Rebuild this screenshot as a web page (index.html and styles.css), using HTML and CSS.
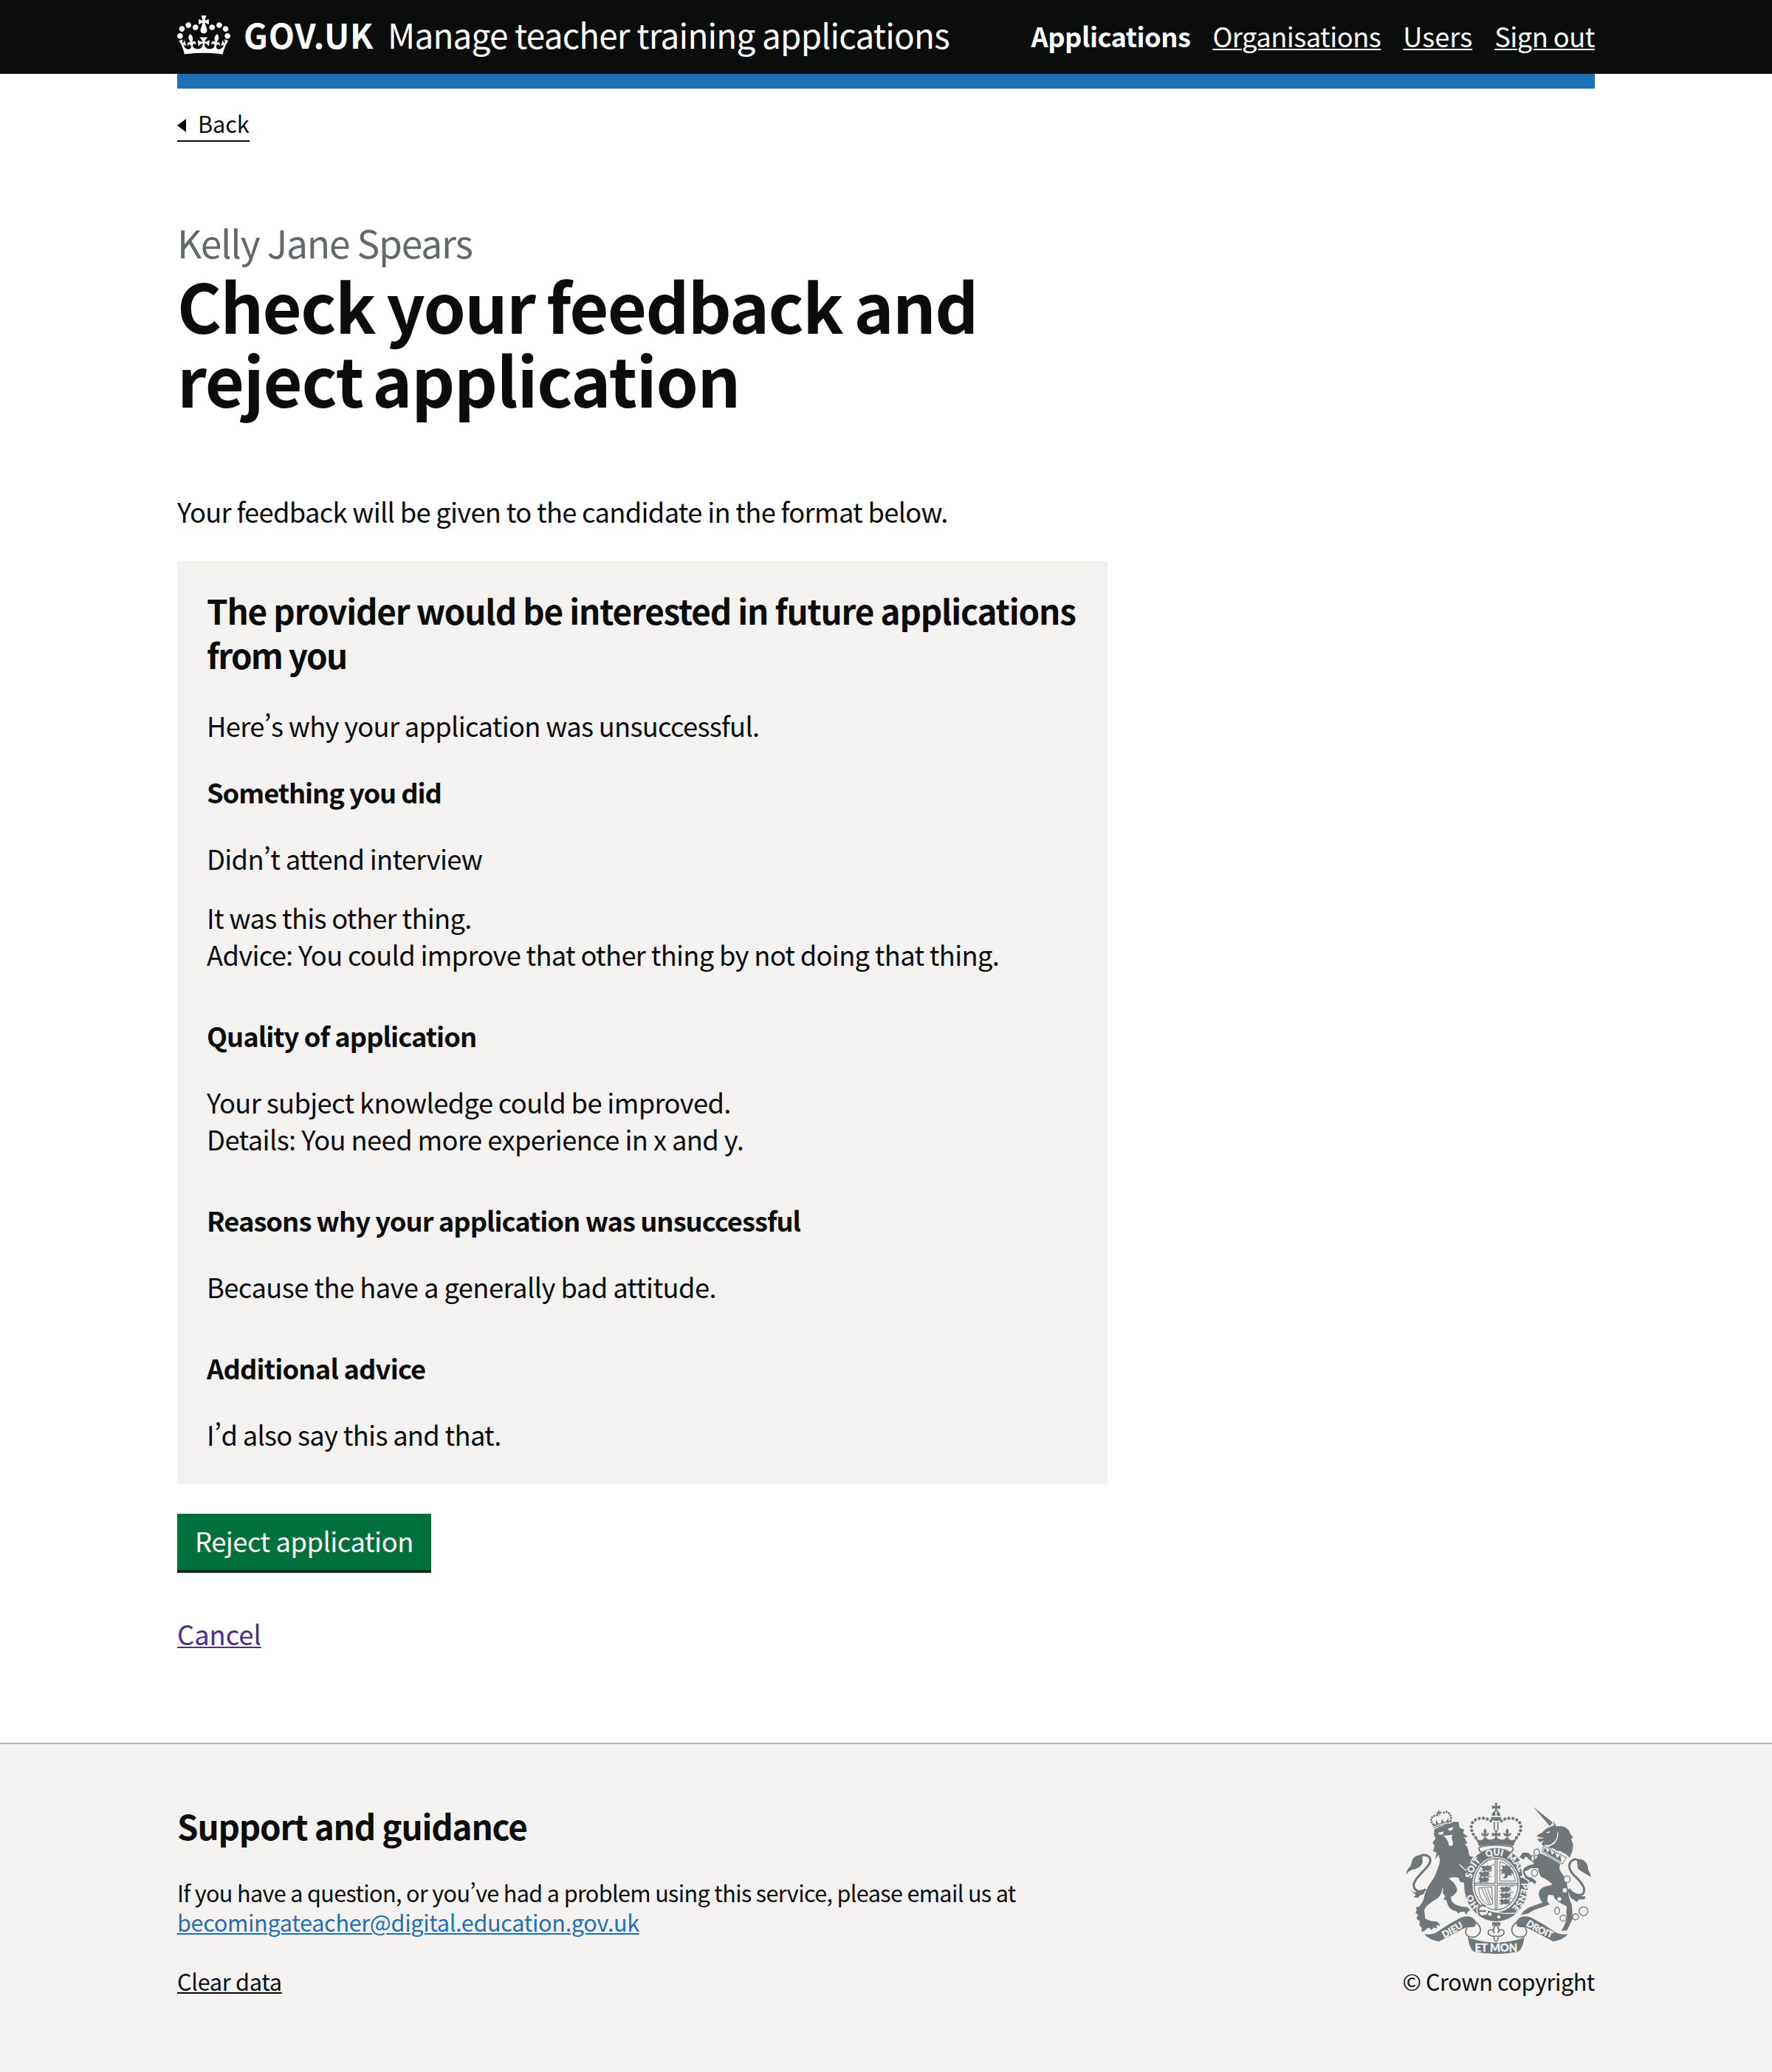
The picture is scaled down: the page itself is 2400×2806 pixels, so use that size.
FILE: index.html
```html
<!DOCTYPE html>
<html lang="en">
<head>
<meta charset="utf-8">
<title>Check your feedback and reject application - Manage teacher training applications - GOV.UK</title>
<link rel="stylesheet" href="styles.css">
</head>
<body>
<header class="header">
  <div class="container header-row">
    <a class="logo" href="#">
      <svg class="crown" viewBox="0 0 132 97" fill="currentColor" aria-hidden="true"><path fill-rule="evenodd" d="M25 30.2c3.5 1.5 7.7-.2 9.1-3.7 1.5-3.6-.2-7.8-3.9-9.2-3.6-1.4-7.6.3-9.1 3.9-1.4 3.5.3 7.5 3.9 9zM9 39.5c3.6 1.5 7.8-.2 9.2-3.7 1.5-3.6-.2-7.8-3.9-9.1-3.6-1.5-7.6.2-9.1 3.8-1.4 3.5.3 7.5 3.8 9zM4.4 57.2c3.5 1.5 7.7-.2 9.1-3.8 1.5-3.6-.2-7.7-3.9-9.1-3.5-1.5-7.6.3-9.1 3.8-1.4 3.5.3 7.6 3.9 9.1zm38.3-21.4c3.5 1.5 7.7-.2 9.1-3.8 1.5-3.6-.2-7.7-3.9-9.1-3.6-1.5-7.6.3-9.1 3.8-1.3 3.6.4 7.7 3.9 9.1zm64.4-5.6c-3.6 1.5-7.8-.2-9.1-3.7-1.5-3.6.2-7.8 3.8-9.2 3.6-1.4 7.7.3 9.2 3.9 1.3 3.5-.4 7.5-3.9 9zm15.9 9.3c-3.6 1.5-7.7-.2-9.1-3.7-1.5-3.6.2-7.8 3.7-9.1 3.6-1.5 7.7.2 9.2 3.8 1.5 3.5-.3 7.5-3.8 9zm4.7 17.7c-3.6 1.5-7.8-.2-9.2-3.8-1.5-3.6.2-7.7 3.9-9.1 3.6-1.5 7.7.3 9.2 3.8 1.3 3.5-.4 7.6-3.9 9.1zM89.3 35.8c-3.6 1.5-7.8-.2-9.2-3.8-1.4-3.6.2-7.7 3.9-9.1 3.6-1.5 7.7.3 9.2 3.8 1.4 3.6-.3 7.7-3.9 9.1zM69.7 17.7l8.9 4.7V9.3l-8.9 2.8c-.2-.3-.5-.6-.9-.9L72.4 0H59.6l3.5 11.2c-.3.3-.6.5-.9.9l-8.8-2.8v13.1l8.8-4.7c.3.3.6.7.9.9l-5 15.4v.1c-.2.8-.4 1.6-.4 2.4 0 4.1 3.1 7.5 7 8.1h.2c.3 0 .7.1 1 .1.4 0 .7 0 1-.1h.2c4-.6 7.1-4.1 7.1-8.1 0-.8-.1-1.7-.4-2.4V34l-5.1-15.4c.4-.2.7-.6 1-.9zM66 92.8c16.9 0 32.8 1.1 47.1 3.2 4-16.9 8.9-26.7 14-33.5l-9.6-3.4c1 4.9 1.1 7.2 0 10.2-1.5-1.4-3-4.3-4.2-8.7L108.6 76c2.8-2 5-3.2 7.5-3.3-4.4 9.4-10 11.9-13.6 11.2-4.3-.8-6.3-4.6-5.6-7.9 1-4.7 5.7-5.9 8-.5 4.3-8.7-3-11.4-7.6-8.8 7.1-7.2 7.9-13.5 2.1-21.1-8 6.1-8.1 12.3-4.5 20.8-4.7-5.4-12.1-2.5-9.5 6.2 3.4-5.2 7.9-2 7.2 3.1-.6 4.3-6.4 7.8-13.5 7.2-10.3-.9-10.9-8-11.2-13.8 2.5-.5 7.1 1.8 11 7.3L80.2 60c-4.1 4.4-8 5.3-12.3 5.4 1.4-4.4 8-11.6 8-11.6H55.5s6.4 7.2 7.9 11.6c-4.2-.1-8-1-12.3-5.4l1.4 16.4c3.9-5.5 8.5-7.7 10.9-7.3-.3 5.8-.9 12.8-11.1 13.8-7.2.6-12.9-2.9-13.5-7.2-.7-5 3.8-8.3 7.1-3.1 2.7-8.7-4.6-11.6-9.4-6.2 3.7-8.5 3.6-14.7-4.6-20.8-5.8 7.6-5 13.9 2.2 21.1-4.7-2.6-11.9.1-7.7 8.8 2.3-5.5 7.1-4.2 8.1.5.7 3.3-1.3 7.1-5.7 7.9-3.5.7-9-1.8-13.5-11.2 2.5.1 4.7 1.3 7.5 3.3l-4.7-15.4c-1.2 4.4-2.7 7.2-4.3 8.7-1.1-3-.9-5.3 0-10.2l-9.5 3.4c5 6.9 9.9 16.7 14 33.5 14.8-2.1 30.8-3.2 47.7-3.2z"/></svg>
      <span class="logotype">GOV.UK</span>
    </a>
    <a class="service" href="#">Manage teacher training applications</a>
    <nav class="nav">
      <a class="nav-current" href="#">Applications</a>
      <a href="#">Organisations</a>
      <a class="track-0" href="#">Users</a>
      <a href="#">Sign out</a>
    </nav>
  </div>
</header>

<div class="container">
  <div class="phase-bar"></div>
  <a class="back" href="#"><svg class="back-arrow" viewBox="0 0 12 18" aria-hidden="true"><path d="M0 9 12 0v18z" fill="currentColor"/></svg>Back</a>

  <main class="main">
    <span class="caption">Kelly Jane Spears</span>
    <h1 class="title">Check your feedback and<br><span class="title-end">reject application</span></h1>
    <p class="body lead">Your feedback will be given to the candidate in the format below.</p>

    <section class="feedback">
      <h2 class="heading">The provider would be interested in future applications<br><span class="heading-end">from you</span></h2>
      <p class="body">Here<span class="apos">’</span>s why your application was unsuccessful.</p>
      <h3 class="subheading track-30">Something you did</h3>
      <p class="body">Didn<span class="apos">’</span>t attend interview</p>
      <p class="body close">It was this other thing.<br>Advice: You could improve that other thing by not doing that thing.</p>
      <h3 class="subheading section">Quality of application</h3>
      <p class="body track-17">Your subject knowledge could be improved.<br><span class="track-16">Details: You need more experience in x and y.</span></p>
      <h3 class="subheading section track-27">Reasons why your application was unsuccessful</h3>
      <p class="body track-15">Because the have a generally bad attitude.</p>
      <h3 class="subheading section track-23">Additional advice</h3>
      <p class="body">I<span class="apos">’</span>d also say this and that.</p>
    </section>

    <button class="button" type="button">Reject application</button>
    <p class="cancel"><a href="#">Cancel</a></p>
  </main>
</div>

<footer class="footer">
  <div class="container footer-row">
    <div class="support">
      <h2 class="footer-heading">Support and guidance</h2>
      <p class="small">If you have a question, or you<span class="apos">’</span>ve had a problem using this service, please email us at<br><a class="mail" href="#">becomingateacher@digital.education.gov.uk</a></p>
      <p class="small clear"><a href="#">Clear data</a></p>
    </div>
    <a class="copyright" href="#">
      <svg class="arms" viewBox="70 60 756 624" aria-hidden="true">
        <defs>
          <path id="garter" d="M437 516A103 119 0 0 1 437 278A103 119 0 0 1 437 516"/>
          <path id="dieu" d="M214 620Q264 596 316 561"/>
          <path id="droit" d="M549 556Q600 592 680 622"/>
          <g id="beast"><path d="M2 10l8-6 10 3 8-5 8 4 9-3-3 7 6 5-8 3 3 7-8-3-7 3-8-3-8 5-6-4 4-6z"/><path d="M4 24l-5-5M44 4l8-5 5 4" fill="none" stroke-width="3"/></g>
          <path id="cross" d="M-6-17H6L3-4 17-7V7L3 4 6 17H-6L-3 4-17 7V-7L-3-4z"/>
          <path id="fleur" d="M0-20Q11-8 3 3L16-2Q16 12 3 12V20H-3V12Q-16 12-16-2L-3 3Q-11-8 0-20z"/>
        </defs>
        <!-- lion -->
        <g transform="translate(45 45)">
          <path class="ink" d="M140 128 160 118Q190 108 218 97L240 97 243 120 262 128 258 142 278 158 262 160 276 185 264 186Q280 200 281 225 283 240 300 238 285 258 282 275L270 290 285 300 290 330 300 345 303 375 290 372 282 380 270 370 262 345 245 340 240 325Q225 318 200 326 232 350 234 375 225 395 208 402L212 420Q230 440 258 442 280 440 288 458L280 458 270 474 264 462 245 462 240 470 230 460Q205 455 196 435L190 415 178 412 185 400 175 385Q178 370 175 360 172 395 150 410 115 430 105 445L100 455 104 490Q125 502 150 502 165 510 163 520L150 516 152 530 138 526 130 536 118 526 110 532 98 542 88 542 90 528 80 515 82 500 68 490 75 475 64 465 70 455 66 445 80 440Q98 420 100 400 105 375 125 345 145 320 155 285 165 265 163 248L158 230 145 250 150 222 135 215 142 195 134 180 146 165 140 150z"/>
          <path class="paper" d="M156 141 179 136 176 147 164 150zM196 124 220 118 211 132 201 133zM178 153 216 149 211 160 214 172Q223 190 209 196 197 194 198 180L190 165z"/>
          <path class="paper-line" d="M243 270 280 304 290 332"/>
          <path class="line" stroke-width="9" d="M106 370C85 388 58 380 57 352 62 320 112 290 123 262 130 238 108 225 84 235"/>
          <path class="ink" d="M92 232C65 228 50 245 47 268 44 285 30 280 27 312 35 295 50 291 65 288 85 280 97 265 93 250zM42 373 60 384 106 368 98 390 82 396 75 405 57 403 66 394z"/>
          <path class="beads" d="M136 108C120 88 130 74 145 71L158 69M207 92C214 72 202 58 188 56L172 62" stroke-width="9" stroke-dasharray="0 11"/>
          <path class="ink" d="M134 101 141 123Q170 106 209 107L208 90 202 100 196 82 188 98 180 98 172 84 168 102 158 104 148 88 147 108z"/>
          <use href="#cross" class="ink" transform="translate(160 60) rotate(-12) scale(.6)"/>
          <path class="paper-line" d="M139 117Q175 102 210 101"/>
        </g>
        <!-- crown -->
        <use href="#cross" class="ink" x="437" y="82"/>
        <path class="ink" d="M420 118Q420 98 434 98V116zM454 118Q454 98 440 98V116zM415 122H459Q456 138 437 138 418 138 415 122z"/>
        <path class="line" stroke-width="5" d="M430 142V175M444 142V175"/>
        <path class="beads" stroke-width="13" stroke-dasharray="0 16.5" d="M354 206C320 165 338 127 380 127 398 127 408 132 420 140M520 206C554 165 536 127 494 127 476 127 466 132 454 140"/>
        <path class="ink" d="M347 194 368 241Q437 225 506 241L527 194 510 215 494 215Q482 198 470 213L456 214 437 206 418 214 404 213Q392 198 380 215L364 215z"/>
        <use href="#fleur" class="ink" x="392" y="188"/><use href="#fleur" class="ink" x="482" y="188"/><use href="#cross" class="ink" x="437" y="193"/>
        <path class="line" stroke-width="5" d="M378 264C364 260 364 246 376 243Q437 229 498 243C510 246 510 260 496 264"/>
        <!-- garter -->
        <ellipse class="ink" cx="437" cy="397" rx="130" ry="149"/>
        <ellipse class="paper" cx="437" cy="397" rx="96" ry="112"/>
        <ellipse class="line" cx="437" cy="395" rx="89" ry="104" stroke-width="4"/>
        <g class="motto" font-size="36">
          <text><textPath href="#garter" startOffset="15.5%">HO</textPath></text>
          <text><textPath href="#garter" startOffset="34.5%">SOIT</textPath></text>
          <text><textPath href="#garter" startOffset="49%">QUI</textPath></text>
          <text><textPath href="#garter" startOffset="62%">MAL</textPath></text>
          <text><textPath href="#garter" startOffset="70.5%">Y</textPath></text>
          <text><textPath href="#garter" startOffset="82%">PENSE</textPath></text>
        </g>
        <g class="ink charges">
          <use href="#beast" x="374" y="316"/><use href="#beast" x="364" y="340"/><use href="#beast" x="362" y="363"/>
          <use href="#beast" x="450" y="402"/><use href="#beast" x="450" y="427"/><use href="#beast" x="448" y="452"/>
          <path d="M460 318l12 4 8-6 6 8 12-2-6 9 12 8 4 14-10-4 2 12-12-4-10 14-14-2 10-8-4-12-12 6 4-12-8-4 10-6z"/>
        </g>
        <path class="line" stroke-width="3" d="M452 303V382H516M452 303Q500 310 516 382M366 410 419 406 423 476 404 480Q366 455 366 410M378 412 408 476M390 412 414 474M402 412 418 460"/>
        <path class="line" stroke-width="11" d="M437 291V497M349 395H525"/>
        <path class="paper-line" d="M437 293V495M351 395H523"/>
        <path class="paper-line" d="M392 492Q440 520 520 512"/>
        <circle class="paper" cx="380" cy="503" r="24"/>
        <path class="line" stroke-width="7" d="M396 486Q380 474 368 488 360 504 370 520 382 530 394 520M364 504H396"/>
        <circle class="paper" cx="412" cy="517" r="7"/><circle class="paper" cx="448" cy="528" r="7"/>
        <!-- unicorn -->
        <g transform="translate(510 45)">
          <path class="paper" d="M18 232 42 214 100 235 100 330 76 350 36 325z"/>
          <path class="ink" d="M78 36 158 100 145 114zM160 93 172 115Q190 112 205 118 225 128 228 145L240 160 232 165 240 190Q240 215 225 243L212 228 198 222 190 215 175 215 162 205 150 205 136 198Q165 190 172 175L165 180Q150 195 125 190L118 195 112 185 122 172 105 180 95 168 108 160 92 155Q95 148 115 140 125 125 145 118L163 110z"/>
          <path class="paper" d="M128 141 146 134 144 142zM100 164 120 158 114 166z"/>
          <path class="paper-line" d="M176 140Q184 172 140 197"/>
          <path class="ink" d="M108 225 150 245 188 268Q180 285 190 300 215 330 218 370 222 410 235 435L238 490 226 515 215 538 192 540 205 515 215 490 212 460 215 440Q180 425 165 408L160 395 140 393 136 402 135 420 145 432 120 442 80 455 55 470 28 475 38 460 60 445 100 430 115 425Q100 405 100 385 105 365 130 358 150 355 155 350 135 330 110 320 98 305 98 285L70 285Q55 295 42 298L48 310Q55 325 70 322L90 338 85 350 70 338 60 345 62 335 45 325 35 300 40 285Q60 270 78 270L80 262 60 250Q50 235 45 240L38 250 22 240 35 222 58 222Q75 240 88 250L95 235z"/>
          <path class="line" stroke-width="3" d="M120 196 113 219 196 268 212 244"/>
          <path class="beads" stroke-width="6" stroke-dasharray="0 9" d="M124 196 212 242"/>
          <path class="ink" d="M118 216 126 200 136 222 146 206 154 232 166 218 174 244 188 230 192 260z"/>
          <path class="line" stroke-width="9" d="M222 370C250 402 290 405 284 366 274 330 224 310 224 276 228 250 248 244 262 254"/>
          <path class="ink" d="M254 250C282 242 300 265 300 285 303 300 310 302 312 322 295 308 276 302 260 288zM213 365 230 405 255 422 264 412 286 412 290 400 262 398z"/>
          <g class="chain"><ellipse cx="92" cy="220" rx="11" ry="13"/><ellipse cx="76" cy="245" rx="8" ry="11"/><ellipse cx="83" cy="304" rx="12" ry="14"/><circle cx="215" cy="330" r="13"/><ellipse cx="175" cy="458" rx="10" ry="14"/><ellipse cx="200" cy="488" rx="13" ry="12"/><circle cx="250" cy="483" r="12"/><circle cx="282" cy="460" r="18"/></g>
          <circle class="paper" cx="206" cy="375" r="9"/><circle class="paper" cx="184" cy="410" r="8"/>
        </g>
        <!-- scroll -->
        <g id="scroll-half"><path class="ink" d="M145 598Q180 603 202 586 245 555 295 530 335 518 352 542 362 566 340 570L316 570Q270 592 205 628 165 622 145 598z"/><path class="line" stroke-width="5" d="M354 548Q384 575 368 596 352 618 322 606 304 590 320 570M324 606 331 640"/></g>
        <use href="#scroll-half" transform="matrix(-1 0 0 1 874 0)"/>
        <path class="ink" d="M324 612Q437 652 550 612 546 655 528 668 437 688 345 668 328 655 324 612z"/>
        <g class="motto" font-size="38"><text><textPath href="#dieu" startOffset="50%">DIEU</textPath></text><text><textPath href="#droit" startOffset="47%">DROIT</textPath></text><text x="437" y="669" font-size="44">ET MON</text></g>
        <path class="ink" d="M421 550H454V566Q437 556 421 566z"/>
        <path class="line" stroke-width="5" d="M437 560Q454 576 444 594 452 572 468 584 474 602 452 606 446 606 445 612 444 626 437 627 430 626 429 612 428 606 422 606 400 602 406 584 422 572 430 594 420 576 437 560M424 606H450"/>
      </svg>
      <span>© Crown copyright</span>
    </a>
  </div>
</footer>
</body>
</html>
```
FILE: styles.css
```css
* { box-sizing: border-box; }

body {
  margin: 0;
  background: #fff;
  color: #0b0c0c;
  font-family: "Noto Sans CJK SC", "Noto Sans", sans-serif;
  font-size: 36.3px;
  line-height: 50px;
  letter-spacing: -0.019em;
}

h1, h2, h3, p { margin: 0; }

a {
  color: inherit;
  text-decoration-thickness: 2px;
  text-underline-offset: 2px;
}

/* Proportional form of the curly apostrophe */
.apos { font-feature-settings: "pwid", "palt"; }

.container { width: 1920px; margin: 0 auto; }

/* Header */
.header { height: 100px; background: #0b0c0c; color: #fff; }
.header-row { display: flex; align-items: flex-start; }
.logo { display: flex; text-decoration: none; }
.crown { width: 72px; height: 53px; margin-top: 21px; }
.logotype {
  width: 195px;
  margin: 16px 0 0 18px;
  font-size: 45.8px;
  font-weight: 700;
  line-height: 60px;
  letter-spacing: 0.018em;
}
.service {
  margin-top: 16px;
  font-size: 45.8px;
  line-height: 60px;
  letter-spacing: -0.017em;
  text-decoration: none;
}
.nav {
  display: flex;
  gap: 30px;
  margin: 23px 0 0 auto;
  letter-spacing: -0.0145em;
}
.nav-current { font-weight: 700; text-decoration: none; }

.phase-bar { height: 20px; background: #1d70b8; }

.back {
  display: inline-flex;
  align-items: center;
  width: 98px;
  margin-top: 27px;
  padding-bottom: 3px;
  border-bottom: 2px solid #0b0c0c;
  font-size: 30.6px;
  line-height: 40px;
  letter-spacing: -0.002em;
  text-decoration: none;
}
.back-arrow { width: 12px; height: 18px; margin: 6px 16px 0 0; }

/* Page content */
.main { display: flex; flex-direction: column; align-items: flex-start; width: 1260px; height: 2168px; padding-top: 106px; }
.caption { color: #626a6e; font-size: 51.6px; line-height: 60px; letter-spacing: -0.0245em; }
.title { margin-top: 4px; font-size: 91.7px; font-weight: 700; line-height: 100px; letter-spacing: -0.0178em; word-spacing: -0.04em; }
.title-end { letter-spacing: -0.0133em; word-spacing: -0.08em; }
.lead { margin-top: 105px; }

.feedback { width: 1260px; margin-top: 43px; padding: 36px 40px 43px; background: #f3f2f1; }
.heading { margin-bottom: 41px; font-size: 45.8px; line-height: 60px; letter-spacing: -0.0253em; white-space: nowrap; }
.heading-end { letter-spacing: -0.0386em; }
.subheading { margin: 40px 0; font-size: 36.3px; line-height: 50px; letter-spacing: -0.026em; }
.subheading.section { margin-top: 60px; }
.body.close { margin-top: 30px; }

.track-0 { letter-spacing: -0.001em; }
.track-15 { letter-spacing: -0.015em; }
.track-16 { letter-spacing: -0.0162em; }
.track-17 { letter-spacing: -0.0176em; }
.subheading.track-23 { letter-spacing: -0.0227em; }
.subheading.track-27 { letter-spacing: -0.0272em; }
.subheading.track-30 { letter-spacing: -0.0297em; }

.button {
  width: 344px;
  height: 76px;
  margin: 40px 0 0;
  padding: 17px 24px 21px;
  border: 0;
  background: #00703c;
  box-shadow: 0 4px 0 #002d18;
  color: #fff;
  font: inherit;
  line-height: 38px;
  letter-spacing: -0.013em;
  text-align: left;
  white-space: nowrap;
}
.cancel { margin-top: 61px; color: #4c2c92; letter-spacing: 0; }

/* Footer */
.footer { height: 446px; border-top: 2px solid #b1b4b6; background: #f3f2f1; }
.footer-row { display: flex; justify-content: space-between; align-items: flex-start; }
.support { padding-top: 80px; }
.footer-heading { font-size: 45.8px; line-height: 60px; letter-spacing: -0.0256em; }
.small { margin-top: 41px; font-size: 30.6px; line-height: 40px; letter-spacing: -0.0213em; }
.mail { color: #1d70b8; letter-spacing: -0.0103em; }
.small.clear { margin-top: 40px; letter-spacing: -0.0087em; }
.copyright {
  display: flex;
  flex-direction: column;
  align-items: center;
  gap: 15px;
  padding-top: 78px;
  font-size: 30.6px;
  line-height: 40px;
  letter-spacing: -0.0138em;
  text-decoration: none;
}

/* Royal arms */
.arms { width: 252px; height: 208px; }
.ink { fill: #6f777b; }
.paper { fill: #f3f2f1; }
.line { fill: none; stroke: #6f777b; }
.paper-line { fill: none; stroke: #f3f2f1; stroke-width: 4; }
.beads { fill: none; stroke: #6f777b; stroke-linecap: round; }
.charges { stroke: #6f777b; }
.chain { fill: #f3f2f1; stroke: #6f777b; stroke-width: 4; }
.motto { fill: #f3f2f1; stroke: #f3f2f1; stroke-width: 1; font-family: Lato, sans-serif; font-weight: 900; letter-spacing: 0; text-anchor: middle; }
```
